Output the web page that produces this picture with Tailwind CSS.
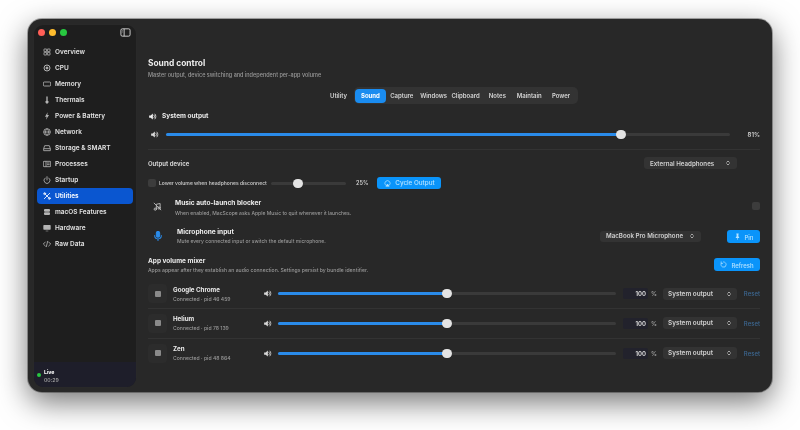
<!DOCTYPE html>
<html lang="en">
<head>
<meta charset="UTF-8">
<title>Sound control</title>
<script src="https://cdn.jsdelivr.net/npm/@tailwindcss/browser@4"></script>
</head>
<body class="w-[800px] h-[430px] overflow-hidden bg-white font-['Inter','Liberation_Sans',sans-serif] pt-[19px] pl-[28px]">

<svg class="hidden">
  <symbol id="speaker" viewBox="0 0 24 24"><path d="M3 9v6h4l6 5V4L7 9z" fill="currentColor"/><path d="M16 8.500a5 5 0 0 1 0 7M18.500 5.500a9 9 0 0 1 0 13" fill="none" stroke="currentColor" stroke-width="2.200" stroke-linecap="round"/></symbol>
  <symbol id="updown" viewBox="0 0 24 24"><path d="M7 9l5-5 5 5M7 15l5 5 5-5" fill="none" stroke="currentColor" stroke-width="3" stroke-linecap="round" stroke-linejoin="round"/></symbol>
</svg>

<div class="w-[744px] h-[373px] rounded-[14px] bg-[#282828] shadow-[0_10px_30px_rgba(0,0,0,0.55)] ring-1 ring-black/30 flex p-[5px] pr-0 blur-[0.25px]">

  <!-- sidebar -->
  <aside class="relative w-[104px] h-[364px] rounded-[10px] bg-[#1e1e1e] border border-white/5 overflow-hidden flex flex-col shrink-0">
    <div class="h-[14px] flex items-center pl-[3.500px] pr-[5px] gap-[4px] shrink-0">
      <span class="w-[7px] h-[7px] rounded-full bg-[#ff5f57]"></span>
      <span class="w-[7px] h-[7px] rounded-full bg-[#febc2e]"></span>
      <span class="w-[7px] h-[7px] rounded-full bg-[#28c840]"></span>
      <svg class="ml-auto w-[11px] h-[11px] text-[#d8d8d8]" viewBox="0 0 24 24" fill="none" stroke="currentColor" stroke-width="2"><rect x="2" y="4" width="20" height="16" rx="3"/><path d="M9 4v16"/><path d="M5 8h1M5 11h1" /></svg>
    </div>
    <nav class="mt-[5px] px-[3px] flex flex-col text-[6.500px] font-semibold text-[#e2e2e2]">
      <a class="h-[16px] flex items-center gap-[4px] pl-[6px]"><svg class="w-[8px] h-[8px] text-[#b4b4b4]" viewBox="0 0 24 24" fill="none" stroke="currentColor" stroke-width="2.500"><rect x="3" y="3" width="8" height="8" rx="1"/><rect x="13" y="3" width="8" height="8" rx="1"/><rect x="3" y="13" width="8" height="8" rx="1"/><rect x="13" y="13" width="8" height="8" rx="1"/></svg><span class="translate-y-px">Overview</span></a>
      <a class="h-[16px] flex items-center gap-[4px] pl-[6px]"><svg class="w-[8px] h-[8px] text-[#b4b4b4]" viewBox="0 0 24 24" fill="none" stroke="currentColor" stroke-width="3"><circle cx="12" cy="12" r="9"/><circle cx="12" cy="12" r="3" fill="currentColor"/></svg><span class="translate-y-px">CPU</span></a>
      <a class="h-[16px] flex items-center gap-[4px] pl-[6px]"><svg class="w-[8px] h-[8px] text-[#b4b4b4]" viewBox="0 0 24 24" fill="none" stroke="currentColor" stroke-width="2.500"><rect x="1" y="6" width="22" height="12" rx="3"/></svg><span class="translate-y-px">Memory</span></a>
      <a class="h-[16px] flex items-center gap-[4px] pl-[6px]"><svg class="w-[8px] h-[8px] text-[#b4b4b4]" viewBox="0 0 24 24" fill="currentColor"><path d="M10 3a2 2 0 0 1 4 0v11a4.500 4.500 0 1 1-4 0z"/></svg><span class="translate-y-px">Thermals</span></a>
      <a class="h-[16px] flex items-center gap-[4px] pl-[6px]"><svg class="w-[8px] h-[8px] text-[#b4b4b4]" viewBox="0 0 24 24" fill="currentColor"><path d="M14 1L6 14h5l-2 9 9-14h-5z"/></svg><span class="translate-y-px">Power &amp; Battery</span></a>
      <a class="h-[16px] flex items-center gap-[4px] pl-[6px]"><svg class="w-[8px] h-[8px] text-[#b4b4b4]" viewBox="0 0 24 24" fill="none" stroke="currentColor" stroke-width="2.500"><circle cx="12" cy="12" r="10"/><path d="M2 12h20M12 2c-6 6-6 14 0 20M12 2c6 6 6 14 0 20"/></svg><span class="translate-y-px">Network</span></a>
      <a class="h-[16px] flex items-center gap-[4px] pl-[6px]"><svg class="w-[8px] h-[8px] text-[#b4b4b4]" viewBox="0 0 24 24" fill="none" stroke="currentColor" stroke-width="2.500"><path d="M2 14l3-9h14l3 9v6H2z"/><path d="M2 14h20"/></svg><span class="translate-y-px">Storage &amp; SMART</span></a>
      <a class="h-[16px] flex items-center gap-[4px] pl-[6px]"><svg class="w-[8px] h-[8px] text-[#b4b4b4]" viewBox="0 0 24 24" fill="none" stroke="currentColor" stroke-width="2.500"><rect x="1" y="4" width="22" height="16" rx="2"/><path d="M9 4v16M12 9h8M12 14h8"/></svg><span class="translate-y-px">Processes</span></a>
      <a class="h-[16px] flex items-center gap-[4px] pl-[6px]"><svg class="w-[8px] h-[8px] text-[#b4b4b4]" viewBox="0 0 24 24" fill="none" stroke="currentColor" stroke-width="2.500" stroke-linecap="round"><path d="M12 2v10M6.500 6a9 9 0 1 0 11 0"/></svg><span class="translate-y-px">Startup</span></a>
      <a class="h-[16px] flex items-center gap-[4px] pl-[6px] rounded-[4px] bg-[#0a56d0] text-white font-semibold"><svg class="w-[8px] h-[8px] text-[#dbe6fa]" viewBox="0 0 24 24" fill="none" stroke="currentColor" stroke-width="3" stroke-linecap="round"><path d="M4 4l16 16M20 4L4 20"/><circle cx="5" cy="5" r="3"/><circle cx="19" cy="19" r="3"/></svg><span class="translate-y-px">Utilities</span></a>
      <a class="h-[16px] flex items-center gap-[4px] pl-[6px]"><svg class="w-[8px] h-[8px] text-[#b4b4b4]" viewBox="0 0 24 24" fill="currentColor"><rect x="3" y="3" width="18" height="8" rx="3"/><rect x="3" y="13" width="18" height="8" rx="3"/></svg><span class="translate-y-px">macOS Features</span></a>
      <a class="h-[16px] flex items-center gap-[4px] pl-[6px]"><svg class="w-[8px] h-[8px] text-[#b4b4b4]" viewBox="0 0 24 24" fill="currentColor"><rect x="1" y="3" width="22" height="14" rx="2"/><path d="M8 20h8v2H8z"/></svg><span class="translate-y-px">Hardware</span></a>
      <a class="h-[16px] flex items-center gap-[4px] pl-[6px]"><svg class="w-[8px] h-[8px] text-[#b4b4b4]" viewBox="0 0 24 24" fill="none" stroke="currentColor" stroke-width="2.500" stroke-linecap="round" stroke-linejoin="round"><path d="M7 6l-6 6 6 6M17 6l6 6-6 6M14 4l-4 16"/></svg><span class="translate-y-px">Raw Data</span></a>
    </nav>
    <div class="mt-auto h-[25px] bg-[#1e1e2a] flex items-center gap-[3px] pl-[3px]">
      <span class="w-[4px] h-[4px] rounded-full bg-[#28c840]"></span>
      <div class="leading-[8px] translate-y-px">
        <div class="text-[5.200px] font-bold text-white">Live</div>
        <div class="text-[5.200px] font-medium text-[#a8a8a8]">00:29</div>
      </div>
    </div>
  </aside>

  <!-- main -->
  <main class="flex-1 min-w-0 pl-[11px] pr-[12px] pt-[33px] flex flex-col text-[#ececec]">
    <h1 class="h-[11px] leading-[11px] text-[8.400px] font-bold translate-y-px">Sound control</h1>
    <p class="mt-[3px] h-[8px] leading-[8px] text-[5.500px] font-medium text-[#989898]">Master output, device switching and independent per-app volume</p>

    <div class="mt-[8px] h-[17px] flex items-center justify-center text-[6px] font-semibold text-[#d4d4d4]">
      <span class="mr-[7px]">Utility</span>
      <div class="h-[17px] w-[224px] rounded-[5px] bg-[#333333] flex items-center px-[1px]">
        <span class="w-[31px] h-[14px] rounded-[4px] bg-[#1a8cf0] text-white font-bold flex items-center justify-center">Sound</span>
        <span class="w-[32px] text-center">Capture</span>
        <span class="w-[32px] text-center">Windows</span>
        <span class="w-[32px] text-center">Clipboard</span>
        <span class="w-[32px] text-center">Notes</span>
        <span class="w-[32px] text-center">Maintain</span>
        <span class="w-[32px] text-center">Power</span>
      </div>
    </div>

    <div class="mt-[7px] h-[10px] flex items-center gap-[5px] text-[6.500px] font-bold">
      <svg class="w-[9px] h-[9px]"><use href="#speaker"/></svg><span class="translate-y-px">System output</span>
    </div>

    <div class="mt-[7px] h-[12px] flex items-center">
      <svg class="w-[9px] h-[9px] ml-[2px] mr-[7px] text-[#d8d8d8]"><use href="#speaker"/></svg>
      <div class="relative w-[564px] h-[3px] rounded-full bg-[#3a3a3a]">
        <div class="h-full w-[455px] rounded-full bg-[#2a8bea]"></div>
        <div class="absolute left-[450px] top-[-3px] w-[10px] h-[9px] rounded-full bg-[#e4e4e4]"></div>
      </div>
      <span class="ml-auto text-[6px] font-semibold text-[#d0d0d0]">81%</span>
    </div>

    <div class="mt-[9px] h-px bg-white/5"></div>

    <div class="mt-[7px] h-[12px] flex items-center justify-between">
      <span class="text-[6px] font-bold text-[#d0d0d0]">Output device</span>
      <div class="mr-[23px] w-[93px] h-[12px] rounded-[3px] bg-[#333333] flex items-center justify-between px-[6px] text-[6.200px] font-semibold text-[#d0d0d0]"><span class="translate-y-px">External Headphones</span><svg class="w-[6px] h-[6px]"><use href="#updown"/></svg></div>
    </div>

    <div class="mt-[7px] h-[14px] flex items-center text-[5px] text-[#c0c0c0] font-semibold">
      <span class="w-[8px] h-[8px] rounded-[2px] bg-[#3c3c3c]"></span>
      <span class="ml-[3px] w-[112px] whitespace-nowrap translate-y-px">Lower volume when headphones disconnect</span>
      <div class="relative w-[75px] h-[3px] rounded-full bg-[#3a3a3a]">
        <div class="absolute left-[22px] top-[-3px] w-[10px] h-[9px] rounded-full bg-[#e4e4e4]"></div>
      </div>
      <span class="ml-[10px] text-[5.500px] text-[#d0d0d0]">25%</span>
      <div class="ml-[9px] w-[64px] h-[12px] rounded-[3px] bg-[#0a94fa] flex items-center justify-center gap-[4px] text-[6.300px] font-medium text-[#b4e2ff]">
        <svg class="w-[7px] h-[7px]" viewBox="0 0 24 24" fill="none" stroke="currentColor" stroke-width="2.500"><path d="M5 17a9 9 0 1 1 14 0"/><path d="M12 14l-6 7h12z" fill="currentColor"/></svg><span class="translate-y-px">Cycle Output</span>
      </div>
    </div>

    <div class="mt-[5px] h-[22px] flex items-center">
      <div class="w-[15px] h-[15px] ml-[2px] flex items-center justify-center text-[#b8b8b8]">
        <svg class="w-[9px] h-[9px]" viewBox="0 0 24 24" fill="none" stroke="currentColor" stroke-width="2.500" stroke-linecap="round"><path d="M9 19V6l10-2v12"/><circle cx="6" cy="19" r="3"/><circle cx="16" cy="16" r="3"/><path d="M3 3l18 18"/></svg>
      </div>
      <div class="ml-[10px]">
        <div class="text-[6.600px] leading-[10px] font-bold translate-y-px">Music auto-launch blocker</div>
        <div class="text-[5px] leading-[9px] font-medium text-[#989898] translate-y-[2px]">When enabled, MacScope asks Apple Music to quit whenever it launches.</div>
      </div>
      <span class="ml-auto w-[8px] h-[8px] rounded-[2px] bg-[#3c3c3c]"></span>
    </div>

    <div class="mt-[8px] h-[22px] flex items-center">
      <div class="w-[15px] h-[15px] ml-[2px] flex items-center justify-center text-[#2a8bea]">
        <svg class="w-[10px] h-[10px]" viewBox="0 0 24 24" fill="none" stroke="currentColor" stroke-width="2.500" stroke-linecap="round"><rect x="8" y="1" width="8" height="14" rx="4" fill="currentColor"/><path d="M4 11a8 8 0 0 0 16 0M12 19v4"/></svg>
      </div>
      <div class="ml-[12px]">
        <div class="text-[6.600px] leading-[10px] font-bold">Microphone input</div>
        <div class="text-[5px] leading-[9px] font-medium text-[#989898]">Mute every connected input or switch the default microphone.</div>
      </div>
      <div class="ml-auto w-[101px] h-[11px] rounded-[3px] bg-[#333333] flex items-center justify-between px-[6px] text-[6.200px] font-semibold text-[#d0d0d0]"><span>MacBook Pro Microphone</span><svg class="w-[6px] h-[6px]"><use href="#updown"/></svg></div>
      <div class="ml-[26px] w-[33px] h-[13px] rounded-[3px] bg-[#0a94fa] flex items-center justify-center gap-[4px] text-[6px] font-medium text-[#b4e2ff]">
        <svg class="w-[7px] h-[7px]" viewBox="0 0 24 24" fill="currentColor"><path d="M8 2h8v2l-1 1v6l3 4v2h-5v6h-2v-6H6v-2l3-4V5L8 4z"/></svg><span class="translate-y-px">Pin</span>
      </div>
    </div>

    <div class="mt-[8px] h-[18px] flex items-center justify-between">
      <div class="translate-y-[2px]">
        <div class="text-[6.500px] leading-[9px] font-bold">App volume mixer</div>
        <div class="text-[5.100px] leading-[9px] font-medium text-[#989898]">Apps appear after they establish an audio connection. Settings persist by bundle identifier.</div>
      </div>
      <div class="w-[46px] h-[13px] rounded-[3px] bg-[#0a94fa] flex items-center justify-center gap-[4px] text-[6px] font-medium text-[#b4e2ff]">
        <svg class="w-[7px] h-[7px]" viewBox="0 0 24 24" fill="none" stroke="currentColor" stroke-width="2.500" stroke-linecap="round"><path d="M12 3a9 9 0 1 1-8 5M4 3v5h5"/></svg><span class="translate-y-px">Refresh</span>
      </div>
    </div>

    <div class="mt-[6.500px] flex flex-col">
      <div class="h-[29.500px] flex items-center border-b border-white/5">
        <div class="w-[19px] h-[19px] rounded-[4px] bg-[#2c2c2c] flex items-center justify-center"><span class="w-[6px] h-[6px] rounded-[1px] bg-[#8a8a8a]"></span></div>
        <div class="ml-[6px] w-[90px]">
          <div class="text-[6.200px] leading-[9px] font-bold">Google Chrome</div>
          <div class="text-[5.100px] leading-[9px] font-medium text-[#989898] translate-y-px">Connected · pid 46 459</div>
        </div>
        <svg class="w-[9px] h-[9px] text-[#d8d8d8]"><use href="#speaker"/></svg>
        <div class="relative ml-[6px] w-[338px] h-[3px] rounded-full bg-[#3a3a3a]">
          <div class="h-full w-[169px] rounded-full bg-[#2a8bea]"></div>
          <div class="absolute left-[164px] top-[-3px] w-[10px] h-[9px] rounded-full bg-[#e4e4e4]"></div>
        </div>
        <div class="ml-[7px] w-[25px] h-[11px] rounded-[2px] bg-[#22222c] flex items-center justify-end pr-[2px] text-[6px] font-semibold text-[#e0e0e0]">100</div>
        <span class="ml-[3px] w-[9px] text-[6px] font-medium text-[#a8a8a8]">%</span>
        <div class="ml-[3px] w-[74px] h-[12px] rounded-[3px] bg-[#333333] flex items-center justify-between px-[5px] text-[6.400px] font-semibold text-[#d0d0d0]"><span class="translate-y-px">System output</span><svg class="w-[6px] h-[6px]"><use href="#updown"/></svg></div>
        <span class="ml-auto text-[6px] font-medium text-[#3c6791]">Reset</span>
      </div>
      <div class="h-[29.500px] flex items-center border-b border-white/5">
        <div class="w-[19px] h-[19px] rounded-[4px] bg-[#2c2c2c] flex items-center justify-center"><span class="w-[6px] h-[6px] rounded-[1px] bg-[#8a8a8a]"></span></div>
        <div class="ml-[6px] w-[90px]">
          <div class="text-[6.200px] leading-[9px] font-bold">Helium</div>
          <div class="text-[5.100px] leading-[9px] font-medium text-[#989898] translate-y-px">Connected · pid 78 139</div>
        </div>
        <svg class="w-[9px] h-[9px] text-[#d8d8d8]"><use href="#speaker"/></svg>
        <div class="relative ml-[6px] w-[338px] h-[3px] rounded-full bg-[#3a3a3a]">
          <div class="h-full w-[169px] rounded-full bg-[#2a8bea]"></div>
          <div class="absolute left-[164px] top-[-3px] w-[10px] h-[9px] rounded-full bg-[#e4e4e4]"></div>
        </div>
        <div class="ml-[7px] w-[25px] h-[11px] rounded-[2px] bg-[#22222c] flex items-center justify-end pr-[2px] text-[6px] font-semibold text-[#e0e0e0]">100</div>
        <span class="ml-[3px] w-[9px] text-[6px] font-medium text-[#a8a8a8]">%</span>
        <div class="ml-[3px] w-[74px] h-[12px] rounded-[3px] bg-[#333333] flex items-center justify-between px-[5px] text-[6.400px] font-semibold text-[#d0d0d0]"><span class="translate-y-px">System output</span><svg class="w-[6px] h-[6px]"><use href="#updown"/></svg></div>
        <span class="ml-auto text-[6px] font-medium text-[#3c6791]">Reset</span>
      </div>
      <div class="h-[29.500px] flex items-center">
        <div class="w-[19px] h-[19px] rounded-[4px] bg-[#2c2c2c] flex items-center justify-center"><span class="w-[6px] h-[6px] rounded-[1px] bg-[#8a8a8a]"></span></div>
        <div class="ml-[6px] w-[90px]">
          <div class="text-[6.200px] leading-[9px] font-bold">Zen</div>
          <div class="text-[5.100px] leading-[9px] font-medium text-[#989898] translate-y-px">Connected · pid 48 864</div>
        </div>
        <svg class="w-[9px] h-[9px] text-[#d8d8d8]"><use href="#speaker"/></svg>
        <div class="relative ml-[6px] w-[338px] h-[3px] rounded-full bg-[#3a3a3a]">
          <div class="h-full w-[169px] rounded-full bg-[#2a8bea]"></div>
          <div class="absolute left-[164px] top-[-3px] w-[10px] h-[9px] rounded-full bg-[#e4e4e4]"></div>
        </div>
        <div class="ml-[7px] w-[25px] h-[11px] rounded-[2px] bg-[#22222c] flex items-center justify-end pr-[2px] text-[6px] font-semibold text-[#e0e0e0]">100</div>
        <span class="ml-[3px] w-[9px] text-[6px] font-medium text-[#a8a8a8]">%</span>
        <div class="ml-[3px] w-[74px] h-[12px] rounded-[3px] bg-[#333333] flex items-center justify-between px-[5px] text-[6.400px] font-semibold text-[#d0d0d0]"><span class="translate-y-px">System output</span><svg class="w-[6px] h-[6px]"><use href="#updown"/></svg></div>
        <span class="ml-auto text-[6px] font-medium text-[#3c6791]">Reset</span>
      </div>
    </div>
  </main>
</div>
</body>
</html>
